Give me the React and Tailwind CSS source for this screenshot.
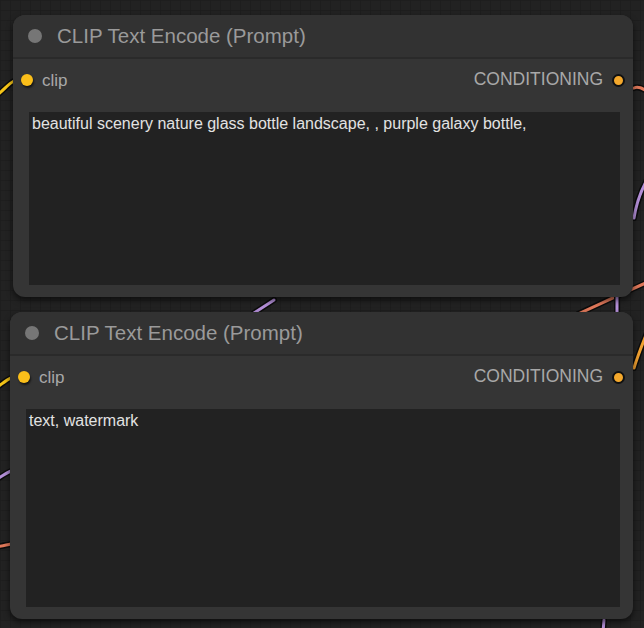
import React from 'react'

/**
 * Node-graph canvas with two CLIP Text Encode nodes.
 */
const nodes = [
  {
    id: 'positive',
    pos: 'left-[13px] top-[15px] w-[620px] h-[282px]',
    text: 'beautiful scenery nature glass bottle landscape, , purple galaxy bottle,',
  },
  {
    id: 'negative',
    pos: 'left-[10px] top-[312px] w-[623px] h-[307px]',
    text: 'text, watermark',
  },
]

export default function App() {
  return (
    <div
      className="relative w-[644px] h-[628px] overflow-hidden bg-[#222222]"
      style={{ fontFamily: '"Liberation Sans", Arial, sans-serif' }}
    >
      <CanvasBackground />
      {nodes.map((node) => (
        <ClipNode key={node.id} pos={node.pos} text={node.text} />
      ))}
    </div>
  )
}

/**
 * Grid + the wires that run behind the nodes
 */
function CanvasBackground() {
  const wires = [
    { d: 'M -4 96 C 4 90, 8 84, 14 81', c: '#f5c518' },
    { d: 'M -4 388 C 2 384, 6 380, 11 378', c: '#f5c518' },
    { d: 'M -4 480 C 2 476, 6 473, 11 471', c: '#b48fd8' },
    { d: 'M -4 547 C 2 546, 6 545, 11 544', c: '#e0785a' },
    { d: 'M 648 178 C 640 192, 636 205, 634 218', c: '#b48fd8' },
    { d: 'M 578 314 C 600 304, 625 292, 648 282', c: '#e0785a' },
    { d: 'M 617 296 L 617 312', c: '#b48fd8' },
    { d: 'M 254 313 L 274 300', c: '#b48fd8' },
    { d: 'M 648 330 C 642 345, 637 358, 634 368', c: '#f0a030' },
    { d: 'M 634 88 C 638 86, 642 88, 648 92', c: '#e0785a' },
    { d: 'M 604 620 L 603 632', c: '#b48fd8' },
  ]

  return (
    <svg className="absolute inset-0" width="644" height="628">
      <defs>
        <pattern id="grid" width="10" height="10" patternUnits="userSpaceOnUse">
          <path d="M 10 0 L 0 0 0 10" fill="none" stroke="#1a1a1a" strokeWidth="1" />
        </pattern>
      </defs>
      <rect width="644" height="628" fill="url(#grid)" />
      {wires.map((w, i) => (
        <g key={i} fill="none" strokeLinecap="round">
          <path d={w.d} stroke="#0c0c0c" strokeWidth="6" />
          <path d={w.d} stroke={w.c} strokeWidth="3" />
        </g>
      ))}
    </svg>
  )
}

/**
 * Single node card
 */
function ClipNode({ pos, text }) {
  return (
    <div
      className={`absolute ${pos} flex flex-col rounded-[12px] bg-[#353535] shadow-[0_3px_6px_rgba(0,0,0,0.6)]`}
    >
      {/* Title bar */}
      <div className="h-[44px] shrink-0 flex items-center gap-[15px] pl-[15px] rounded-t-[12px] bg-[#323232] border-b-2 border-[#2a2a2a]">
        <div className="w-[14px] h-[14px] rounded-full bg-[#767676]" />
        <span className="text-[20.5px] text-[#9a9a9a] leading-none">CLIP Text Encode (Prompt)</span>
      </div>

      {/* Slots */}
      <div className="h-[42px] shrink-0 flex items-center justify-between px-[8px]">
        <div className="flex items-center gap-[9px]">
          <div className="w-[12px] h-[12px] rounded-full bg-[#fbbf1a] shadow-[1px_2px_2px_rgba(0,0,0,0.6)]" />
          <span className="text-[17px] text-[#a8a8a8] leading-none">clip</span>
        </div>
        <div className="flex items-center gap-[9px]">
          <span className="text-[17.5px] text-[#a8a8a8] leading-none">CONDITIONING</span>
          <div className="w-[13px] h-[13px] rounded-full bg-[#f4a82c] border-2 border-[#111]" />
        </div>
      </div>

      {/* Prompt text */}
      <div className="flex-1 mt-[11px] mb-[12px] ml-[16px] mr-[13px] bg-[#222222] pt-[2px] px-[3px] text-[16px] leading-[20px] text-[#e2e2e2]">
        {text}
      </div>
    </div>
  )
}
